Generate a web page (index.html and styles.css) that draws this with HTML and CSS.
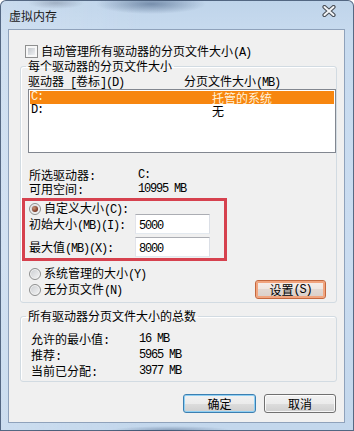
FILE: index.html
```
<!DOCTYPE html>
<html lang="zh-CN">
<head>
<meta charset="utf-8">
<title>虚拟内存</title>
<link rel="stylesheet" href="styles.css">
</head>
<body>
<div class="window">
  <div class="titlebar">
    <span class="title">虚拟内存</span>
    <svg class="close" width="14" height="12" viewBox="0 0 14 12">
      <path d="M2.5 2 L11.5 10 M11.5 2 L2.5 10" stroke="#4a4f57" stroke-width="4.2" stroke-linecap="round" fill="none"/>
      <path d="M2.5 2 L11.5 10 M11.5 2 L2.5 10" stroke="#f4f6f8" stroke-width="2" stroke-linecap="round" fill="none"/>
    </svg>
  </div>
  <div class="client">
    <div class="check-row">
      <span class="cb"></span>
      <span>自动管理所有驱动器的分页文件大小<span class="m">(A)</span></span>
    </div>

    <fieldset class="group g1">
      <legend>每个驱动器的分页文件大小</legend>
      <div class="cols">
        <span class="c1">驱动器<span class="m"> [</span>卷标<span class="m">](D)</span></span>
        <span>分页文件大小<span class="m">(MB)</span></span>
      </div>
      <div class="list">
        <div class="row sel"><span class="c1 m">C:</span><span>托管的系统</span></div>
        <div class="row"><span class="c1 m">D:</span><span>无</span></div>
      </div>
      <div class="info">
        <span>所选驱动器<span class="m">:</span></span><span class="m">C:</span>
        <span>可用空间<span class="m">:</span></span><span class="m">10995 MB</span>
      </div>
      <div class="custom">
        <div class="opt"><span class="radio on"></span><span>自定义大小<span class="m">(C):</span></span></div>
        <div class="field first"><span class="lbl">初始大小<span class="m">(MB)(I):</span></span><div class="input"><span class="m">5000</span></div></div>
        <div class="field"><span class="lbl">最大值<span class="m">(MB)(X):</span></span><div class="input"><span class="m">8000</span></div></div>
      </div>
      <div class="opts">
        <div class="col">
          <div class="opt"><span class="radio"></span><span>系统管理的大小<span class="m">(Y)</span></span></div>
          <div class="opt"><span class="radio"></span><span>无分页文件<span class="m">(N)</span></span></div>
        </div>
        <div class="btn btn-set">设置<span class="m">(S)</span></div>
      </div>
    </fieldset>

    <fieldset class="group g2">
      <legend>所有驱动器分页文件大小的总数</legend>
      <div class="info totals">
        <span>允许的最小值<span class="m">:</span></span><span class="m">16 MB</span>
        <span>推荐<span class="m">:</span></span><span class="m">5965 MB</span>
        <span>当前已分配<span class="m">:</span></span><span class="m">3977 MB</span>
      </div>
    </fieldset>

    <div class="actions">
      <div class="btn btn-default">确定</div>
      <div class="btn">取消</div>
    </div>
  </div>
</div>
</body>
</html>
```
FILE: styles.css
```
html, body {
  margin: 0;
  padding: 0;
}
body {
  width: 354px;
  height: 431px;
  overflow: hidden;
  font-family: "Noto Sans CJK SC", "Noto Sans", sans-serif;
  font-size: 12px;
  line-height: 12px;
  color: #000;
  background: #fff;
}
.window {
  width: 354px;
  height: 431px;
  box-sizing: border-box;
  border: 1px solid rgba(45, 65, 95, 0.75);
  border-radius: 6px 6px 0 0;
  padding: 0 8px 7px 7px;
  display: flex;
  flex-direction: column;
  background:
    radial-gradient(ellipse 55px 10px at 150px 3px, rgba(70, 95, 130, 0.6), rgba(70, 95, 130, 0)),
    radial-gradient(ellipse 28px 6px at 55px 2px, rgba(90, 100, 120, 0.35), rgba(90, 100, 120, 0)),
    radial-gradient(ellipse 60px 4px at 170px 429px, rgba(70, 95, 130, 0.45), rgba(70, 95, 130, 0)),
    linear-gradient(90deg, rgba(255,255,255,0.15), rgba(255,255,255,0) 40%),
    linear-gradient(#bfd4ea, #c8dbef 8%, #cadcf0 60%, #c3d7ec);
}
.titlebar {
  height: 28px;
  flex: none;
  display: flex;
  align-items: flex-start;
}
.title {
  margin-top: 9px;
  margin-left: 1px;
  height: 12px;
  color: #1a1a1a;
}
.close {
  margin-left: auto;
  margin-right: 9px;
  margin-top: 4px;
}
.client {
  flex: 1;
  background: #f0f0f0;
  border: 1px solid #8fa2bb;
  display: flex;
  flex-direction: column;
}
.m {
  font-family: "Liberation Mono", monospace;
  font-size: 12px;
  letter-spacing: -1.2px;
}
.check-row {
  margin: 15px 0 0 16px;
  height: 13px;
  display: flex;
  align-items: center;
  gap: 3px;
}
.cb {
  width: 13px;
  height: 13px;
  box-sizing: border-box;
  border: 1px solid #8e8f8f;
  padding: 2px;
  background: linear-gradient(135deg, #c3c7cc, #eef0f2) content-box, #f7f7f7;
}
.group {
  margin: 2px 7px 0 11px;
  padding: 0 0 6px 5px;
  border: 1px solid #d2dbe2;
  border-radius: 3px;
  min-width: 0;
  box-shadow: inset 1px 1px 0 #fff;
}
.group legend {
  padding: 0 2px;
  height: 12px;
  line-height: 12px;
}
.g2 {
  margin-top: 7px;
  padding-bottom: 4px;
}
.cols {
  display: flex;
  height: 12px;
  margin-top: 3px;
  padding-left: 2px;
}
.cols .c1 {
  width: 156px;
}
.list {
  margin: 2px 0 0 2px;
  height: 64px;
  box-sizing: border-box;
  border: 1px solid #828790;
  background: #fff;
  padding: 1px;
}
.row {
  display: flex;
  height: 13px;
  line-height: 13px;
  padding-left: 1px;
}
.row .c1 {
  width: 181px;
}
.row.sel {
  background: #f7860f;
  color: #fff2dc;
}
.info {
  display: grid;
  grid-template-columns: 109px auto;
  grid-auto-rows: 12px;
  row-gap: 2px;
  margin-top: 16px;
  padding-left: 3px;
}
.totals {
  grid-template-columns: 108px auto;
  row-gap: 4px;
  margin-top: 11px;
  padding-left: 5px;
}
.custom {
  margin: 3px 0 0 -4px;
  width: 205px;
  height: 63px;
  box-sizing: border-box;
  border: 3px solid #d6414e;
}
.opt {
  display: flex;
  align-items: center;
  gap: 3px;
  height: 12px;
}
.custom .opt {
  margin: 2px 0 0 4px;
}
.radio {
  width: 12px;
  height: 12px;
  box-sizing: border-box;
  border-radius: 50%;
  border: 1px solid #8e8f8f;
  background: linear-gradient(135deg, #c9ccd0, #f6f6f6);
  box-shadow: inset 0 0 0 1px #f3f3f3;
  display: grid;
  place-items: center;
}
.radio.on::after {
  content: "";
  width: 6px;
  height: 6px;
  border-radius: 50%;
  background: radial-gradient(circle at 35% 35%, #c99476, #7a3522 70%, #5a2415);
}
.field {
  display: flex;
  align-items: center;
  height: 20px;
  padding-left: 4px;
  margin-top: 3px;
}
.field.first {
  margin-top: -1px;
}
.field .lbl {
  width: 106px;
  height: 12px;
}
.input {
  width: 75px;
  height: 20px;
  box-sizing: border-box;
  border: 1px solid;
  border-color: #abadb3 #dbdfe6 #e3e9ef #e2e3ea;
  background: #fff;
  padding-left: 3px;
  line-height: 18px;
}
.opts {
  display: flex;
  margin-top: 7px;
  padding-left: 3px;
}
.opts .col {
  display: flex;
  flex-direction: column;
  gap: 4px;
}
.btn {
  width: 72px;
  height: 19px;
  box-sizing: border-box;
  border: 1px solid #707070;
  border-radius: 3px;
  background: linear-gradient(#f2f2f2, #ebebeb 50%, #dddddd 50%, #cfcfcf);
  box-shadow: inset 0 0 0 1px rgba(255, 255, 255, 0.8);
  display: flex;
  align-items: center;
  justify-content: center;
  line-height: 12px;
}
.btn-set {
  margin-left: auto;
  margin-right: 10px;
  align-self: flex-end;
  margin-bottom: -3px;
  width: 71px;
  border-color: #c4683e;
  background: linear-gradient(#f7efeb, #efe6e1 50%, #e2d8d2 50%, #d9cec8);
  box-shadow: inset 0 0 0 2px #f1a57f;
}
.actions {
  display: flex;
  justify-content: flex-end;
  gap: 8px;
  margin-top: 12px;
  padding-right: 8px;
}
.btn-default {
  width: 73px;
  border-color: #3c7fb1;
  box-shadow: inset 0 0 0 1px #8fd0f4;
}
```
